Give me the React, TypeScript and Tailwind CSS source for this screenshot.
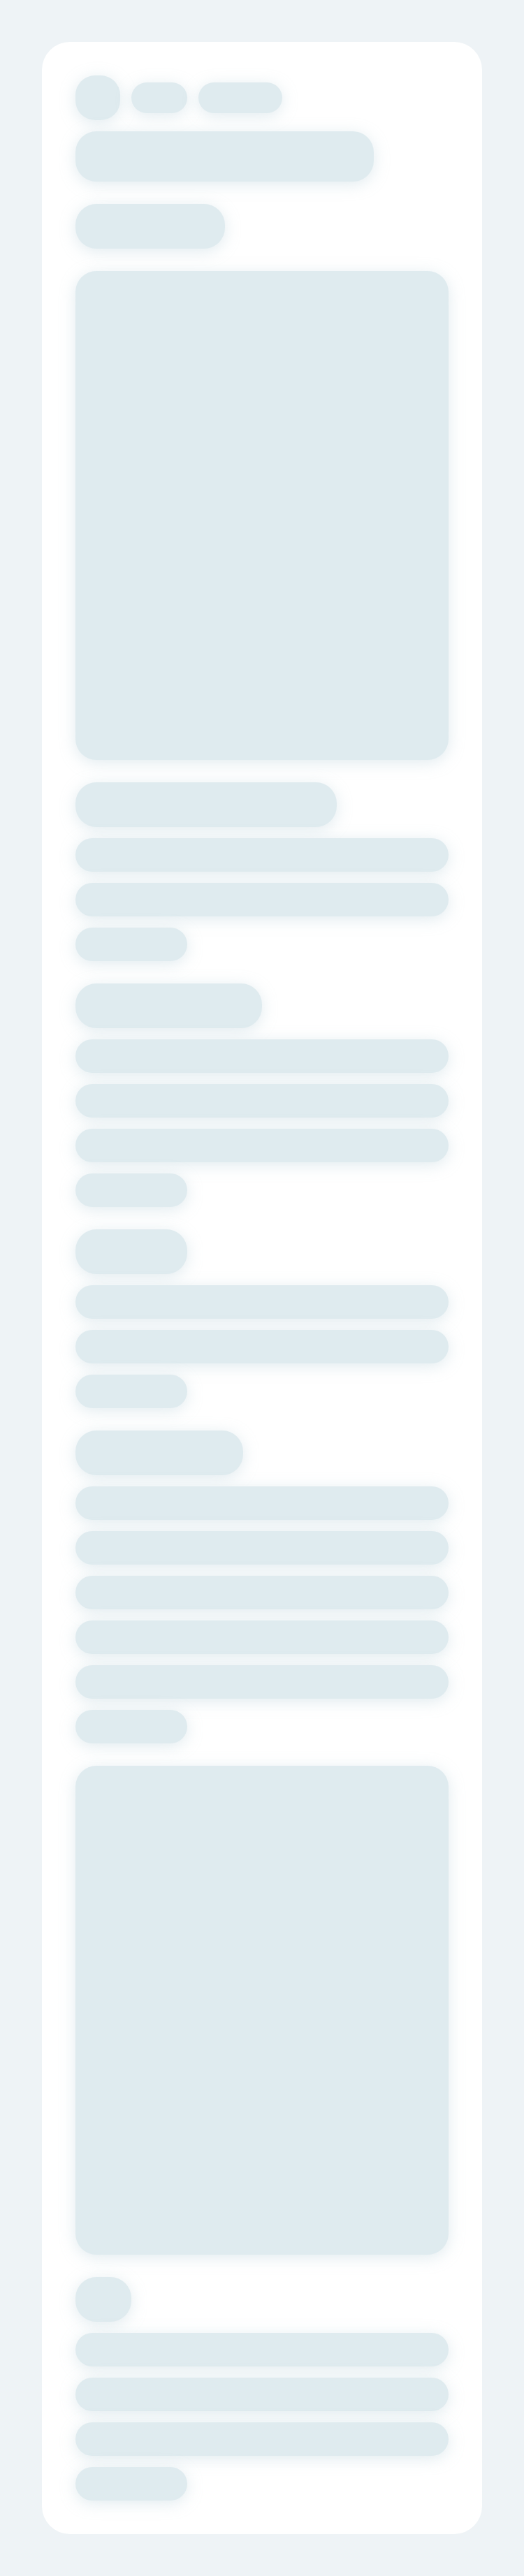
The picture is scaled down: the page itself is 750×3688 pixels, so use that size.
const block = 'bg-[#dfebef] shadow-[0_4px_22px_rgba(170,198,210,0.35)]';

type Section = { heading: string; lines: number };

const topSections: Section[] = [
  { heading: 'w-[70%]', lines: 2 },
  { heading: 'w-1/2', lines: 3 },
  { heading: 'w-[30%]', lines: 2 },
  { heading: 'w-[45%]', lines: 5 },
];

function TextSection({ heading, lines }: Section) {
  return (
    <div className="mt-8 flex flex-col gap-4">
      <div className={`h-16 rounded-[30px] ${heading} ${block}`} />
      {Array.from({ length: lines }).map((_, i) => (
        <div key={i} className={`h-12 w-full rounded-full ${block}`} />
      ))}
      <div className={`h-12 w-[30%] rounded-full ${block}`} />
    </div>
  );
}

export default function App() {
  return (
    <div className="min-h-screen bg-[#eef3f6] p-[60px]">
      <div className="flex flex-col rounded-[40px] bg-white p-12">
        {/* author row */}
        <div className="flex items-center gap-4">
          <div className={`size-16 rounded-[28px] ${block}`} />
          <div className={`h-11 w-20 rounded-full ${block}`} />
          <div className={`h-11 w-[120px] rounded-full ${block}`} />
        </div>

        <div className={`mt-4 h-[72px] w-4/5 rounded-[30px] ${block}`} />
        <div className={`mt-8 h-16 w-2/5 rounded-[30px] ${block}`} />

        <div className={`mt-8 h-[700px] w-full rounded-[30px] ${block}`} />

        {topSections.map((s, i) => (
          <TextSection key={i} {...s} />
        ))}

        <div className={`mt-8 h-[700px] w-full rounded-[30px] ${block}`} />

        <TextSection heading="w-[15%]" lines={3} />
      </div>
    </div>
  );
}
